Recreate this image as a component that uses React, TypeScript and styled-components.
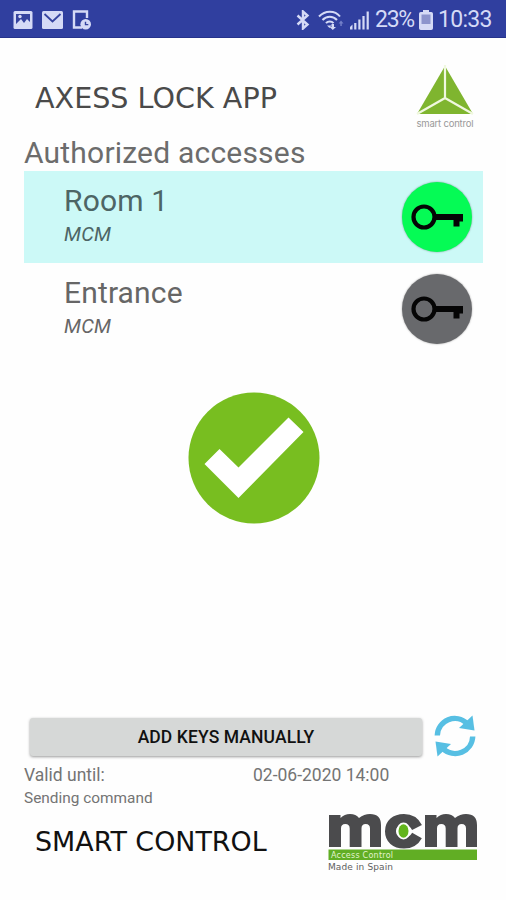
import React from 'react';
import styled, { createGlobalStyle } from 'styled-components';

const GlobalStyle = createGlobalStyle`
  *, *::before, *::after { box-sizing: border-box; }
  body { margin: 0; background: #fefefe; font-family: Roboto, "Liberation Sans", sans-serif; }
  svg { display: block; flex: none; }
  h1, h2, p { margin: 0; font-weight: 400; }
  button { border: 0; padding: 0; font: inherit; background: none; }
`;

const Screen = styled.div`
  width: 506px;
  height: 900px;
  display: flex;
  flex-direction: column;
  overflow: hidden;
`;

const StatusBar = styled.header`
  height: 38px;
  flex: none;
  display: flex;
  align-items: center;
  justify-content: space-between;
  padding: 2px 15px 0 13px;
  background: #303f9f;
  border-bottom: 1px solid #26338b;
  color: #d5daf6;
`;

const StatusGroup = styled.div<{ $gap: number }>`
  display: flex;
  align-items: center;
  gap: ${p => p.$gap}px;
`;

const StatusText = styled.span<{ $width: number; $spacing: number }>`
  width: ${p => p.$width}px;
  font-size: 23px;
  line-height: 26px;
  letter-spacing: ${p => p.$spacing}px;
  white-space: nowrap;
`;

const Header = styled.div`
  height: 97px;
  flex: none;
  display: flex;
  justify-content: space-between;
  padding: 27px 30px 0 35px;
`;

const BrandTitle = styled.h1<{ $size: number; $color: string }>`
  font-family: "DejaVu Sans", sans-serif;
  font-size: ${p => p.$size}px;
  line-height: 34px;
  color: ${p => p.$color};
  white-space: nowrap;
`;

const HeaderTitle = styled.div`
  padding-top: 16px;
`;

const Main = styled.main`
  flex: 1;
  display: flex;
  flex-direction: column;
  padding: 0 23px 0 24px;
`;

const SectionTitle = styled.h2`
  height: 36px;
  font-size: 30px;
  line-height: 35px;
  letter-spacing: 0.2px;
  color: #6c6c6c;
`;

const AccessRow = styled.div<{ $selected?: boolean }>`
  height: 92px;
  display: flex;
  justify-content: space-between;
  align-items: center;
  padding: 0 11px 0 40px;
  background: ${p => (p.$selected ? '#ccf9f7' : 'transparent')};
  color: ${p => (p.$selected ? '#4d6565' : '#666')};
`;

const AccessText = styled.div`
  display: flex;
  flex-direction: column;
  height: 80px;
`;

const AccessName = styled.span`
  font-size: 30px;
  line-height: 36px;
  height: 38px;
  padding-top: 6px;
  letter-spacing: 0.15px;
  flex: none;
`;

const AccessOwner = styled.span`
  font-size: 20px;
  line-height: 24px;
  padding-top: 7px;
  font-style: italic;
  letter-spacing: 0.2px;
`;

const KeyButton = styled.button<{ $active?: boolean }>`
  width: 70px;
  height: 70px;
  border-radius: 50%;
  background: ${p => (p.$active ? '#05fb55' : '#68696c')};
  box-shadow: 0 0 2px rgba(0, 0, 0, 0.4);
`;

const Confirmation = styled.div`
  padding-top: 37px;
  flex: 1;
  display: flex;
  justify-content: center;
  align-items: flex-start;
`;

const ActionRow = styled.div`
  height: 49px;
  display: flex;
  align-items: flex-start;
  padding-left: 6px;
  gap: 12px;
`;

const AddButton = styled.button`
  width: 392px;
  height: 38px;
  margin-top: 4px;
  border-radius: 3px;
  background: #d6d8d7;
  box-shadow: 0 1px 3px rgba(0, 0, 0, 0.4);
  color: #111;
  font-size: 17.5px;
  font-weight: 500;
  letter-spacing: 0.1px;
`;

const RefreshButton = styled.button`
  margin-top: 1px;
  height: 42px;
`;

const InfoRow = styled.div<{ $size: number; $height: number }>`
  display: grid;
  grid-template-columns: 229px 1fr;
  height: ${p => p.$height}px;
  font-size: ${p => p.$size}px;
  line-height: ${p => p.$height}px;
  color: #747474;
`;

const Footer = styled.footer`
  height: 91px;
  flex: none;
  display: flex;
  justify-content: space-between;
  padding: 0 28px 0 35px;
`;

const FooterTitle = styled.div`
  padding-top: 16px;
`;

const LogoSlot = styled.div`
  padding-top: 4px;
`;

const BluetoothSlot = styled.span`
  margin-right: 3px;
`;

const PictureIcon = () => (
  <svg width="20" height="20" viewBox="0 0 20 20">
    <rect x="0.5" y="1" width="19" height="18" rx="1.5" fill="currentColor" />
    <path d="M3 4h14v8l-3-3-3 4-3-4-5 5z" fill="#35439f" />
    <circle cx="7" cy="6.5" r="1.7" fill="currentColor" />
  </svg>
);

const MailIcon = () => (
  <svg width="21" height="20" viewBox="0 0 21 20">
    <rect x="0" y="1" width="21" height="18" rx="1.5" fill="currentColor" />
    <path d="M2.5 4l8 7.5 8-7.5" fill="none" stroke="#35439f" strokeWidth="1.8" />
  </svg>
);

const DeviceClockIcon = () => (
  <svg width="20" height="20" viewBox="0 0 20 20">
    <path d="M15 8V1.500H2v16h8" fill="none" stroke="currentColor" strokeWidth="2.400" />
    <circle cx="13.700" cy="14.200" r="5.300" fill="currentColor" />
    <path d="M13.500 11.800v2.800h2.800" fill="none" stroke="#35439f" strokeWidth="1.400" />
  </svg>
);

const BluetoothIcon = () => (
  <svg width="14" height="20" viewBox="0 0 14 20">
    <path d="M1.500 5.500l10 9L7 18.500V1.500l4.500 4-10 9" fill="none" stroke="currentColor" strokeWidth="2.400" />
  </svg>
);

const WifiIcon = () => (
  <svg width="27" height="20" viewBox="0 0 27 20">
    <g fill="none" stroke="currentColor" strokeWidth="2">
      <path d="M1 6.500C7 0 17 0 22 6.500" />
      <path d="M4.500 10C8.500 5.500 15 5.500 19 10" />
      <path d="M8 13.200C10 10.800 13.500 10.800 15.500 13.200" />
    </g>
    <path d="M9 15.500h4.500l-2 2.500zM13.500 14h2.500v3h2l-3.200 3-3.200-3h1.900z" fill="currentColor" />
    <path d="M23 10.500l2.500 3h-1.700V16h-1.500v-2.500h-1.600z" fill="#7480c9" />
  </svg>
);

const SignalIcon = () => (
  <svg width="20" height="20" viewBox="0 0 20 20" fill="currentColor">
    <path d="M0 19.500V17l2.500-2.500v5z" />
    <rect x="4.200" y="13" width="2.200" height="6.500" />
    <rect x="8.300" y="9.500" width="2.200" height="10" />
    <rect x="12.400" y="6" width="2.200" height="13.500" />
    <rect x="16.600" y="1.500" width="2.200" height="18" />
  </svg>
);

const BatteryIcon = () => (
  <svg width="14" height="20" viewBox="0 0 14 20">
    <path d="M4 0h6v2h2.200q1.800 0 1.800 1.800v14.400q0 1.800-1.800 1.800H1.800Q0 20 0 18.200V3.800Q0 2 1.800 2H4z" fill="currentColor" />
    <rect x="2.500" y="4.500" width="9" height="9.500" fill="#8c94cd" />
  </svg>
);

const SmartControlLogo = () => (
  <svg width="62" height="65" viewBox="0 0 62 65">
    <path d="M31 1L59 49H3z" fill="#7fb52f" />
    <path d="M31 0V33L3 49M31 33L59 49" fill="none" stroke="#f0f8df" strokeWidth="2.200" />
    <text x="2.500" y="61.500" fontFamily="Inter, sans-serif" fontSize="9.500" fill="#999" textLength="57">
      smart control
    </text>
  </svg>
);

const KeyIcon = () => (
  <svg width="70" height="70" viewBox="0 0 70 70">
    <circle cx="22" cy="35" r="10.500" fill="none" stroke="#050505" strokeWidth="4.200" />
    <path d="M33 32H61V39.500H57.500V44.500H51.500V38H33z" fill="#050505" />
  </svg>
);

const CheckIcon = () => (
  <svg width="132" height="132" viewBox="0 0 132 132">
    <circle cx="66" cy="66" r="65.500" fill="#78be20" />
    <path d="M16.500 72L31.500 57 50.500 75.500 100.500 25.500 115.500 40 50.500 106z" fill="#fff" />
  </svg>
);

const RefreshIcon = () => (
  <svg width="42" height="42" viewBox="0 0 42 42">
    <g id="refresh-arrow">
      <path d="M3.300 20.500A17.500 17.500 0 0 1 33 8.500" fill="none" stroke="#57bfe3" strokeWidth="5.400" />
      <path d="M38.500 0.500L40.500 15.500 25 13z" fill="#57bfe3" />
    </g>
    <use href="#refresh-arrow" transform="rotate(180 21 21)" />
  </svg>
);

const McmLogo = () => (
  <svg width="150" height="64" viewBox="0 0 150 64">
    <g fill="#4b4b4d">
      <path
        id="mcm-arch"
        d="M1 2H12.500V5Q16.500 1 22 1Q28 1 31 5Q36 1 42 1Q53 1 53 12V34H42V15.500Q42 11 37.700 11T33.500 15.500V34H21.700V15.500Q21.700 11 17.300 11T13 15.500V34H1z"
      />
      <use href="#mcm-arch" transform="translate(96 0)" />
    </g>
    <path
      d="M89 14.500C86 8.500 81.500 6.500 76 6.500C67.500 6.500 62.500 11 62.500 18.200S67.500 30 76 30C81.500 30 86 28 89 22.500"
      fill="none"
      stroke="#4b4b4d"
      strokeWidth="11"
    />
    <ellipse cx="75.500" cy="18" rx="7" ry="8.500" fill="#fff" />
    <ellipse cx="75.500" cy="18" rx="5" ry="6.700" fill="#62b51c" />
    <rect x="0.500" y="36.500" width="148.500" height="10.500" fill="#61ae24" />
    <text x="3" y="44.500" fontFamily="DejaVu Sans, sans-serif" fontSize="8" fill="#e2f3cf" textLength="62">
      Access Control
    </text>
    <text x="0" y="57" fontFamily="DejaVu Sans, sans-serif" fontSize="9" fill="#606060" textLength="65">
      Made in Spain
    </text>
  </svg>
);

const accesses = [
  { name: 'Room 1', owner: 'MCM', active: true },
  { name: 'Entrance', owner: 'MCM', active: false },
];

export default function App() {
  return (
    <>
      <GlobalStyle />
      <Screen>
        <StatusBar>
          <StatusGroup $gap={9}>
            <PictureIcon />
            <MailIcon />
            <DeviceClockIcon />
          </StatusGroup>
          <StatusGroup $gap={5}>
            <BluetoothSlot>
              <BluetoothIcon />
            </BluetoothSlot>
            <WifiIcon />
            <SignalIcon />
            <StatusText $width={39} $spacing={-1.3}>23%</StatusText>
            <BatteryIcon />
            <StatusText $width={53} $spacing={-0.7}>10:33</StatusText>
          </StatusGroup>
        </StatusBar>
        <Header>
          <HeaderTitle>
            <BrandTitle $size={28.6} $color="#4a4a4a">AXESS LOCK APP</BrandTitle>
          </HeaderTitle>
          <SmartControlLogo />
        </Header>
        <Main>
          <SectionTitle>Authorized accesses</SectionTitle>
          {accesses.map(a => (
            <AccessRow key={a.name} $selected={a.active}>
              <AccessText>
                <AccessName>{a.name}</AccessName>
                <AccessOwner>{a.owner}</AccessOwner>
              </AccessText>
              <KeyButton $active={a.active} aria-label={`Open ${a.name}`}>
                <KeyIcon />
              </KeyButton>
            </AccessRow>
          ))}
          <Confirmation>
            <CheckIcon />
          </Confirmation>
          <ActionRow>
            <AddButton>ADD KEYS MANUALLY</AddButton>
            <RefreshButton aria-label="Refresh">
              <RefreshIcon />
            </RefreshButton>
          </ActionRow>
          <InfoRow $size={17.5} $height={24}>
            <span>Valid until:</span>
            <span>02-06-2020 14:00</span>
          </InfoRow>
          <InfoRow $size={15.4} $height={22}>
            <span>Sending command</span>
          </InfoRow>
        </Main>
        <Footer>
          <FooterTitle>
            <BrandTitle as="p" $size={26.9} $color="#111">SMART CONTROL</BrandTitle>
          </FooterTitle>
          <LogoSlot>
            <McmLogo />
          </LogoSlot>
        </Footer>
      </Screen>
    </>
  );
}
